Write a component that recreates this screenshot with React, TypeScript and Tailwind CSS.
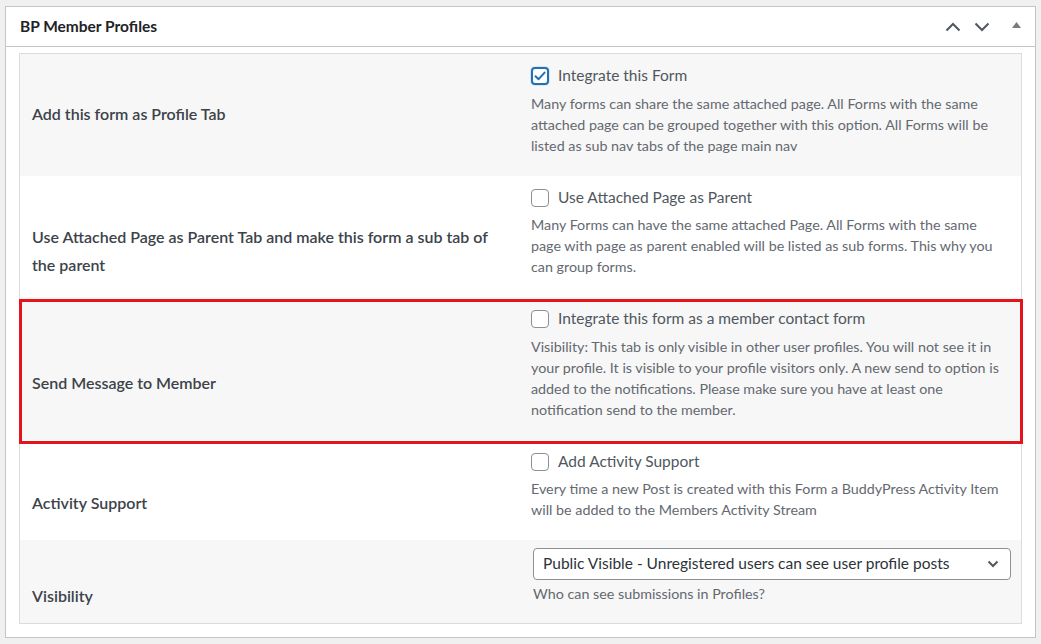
import React from 'react'

const FONT = "font-['Lato','Noto_Sans',sans-serif]"

interface RowProps {
  label: string[]
  labelPad: string
  shaded?: boolean
  children: React.ReactNode
  highlight?: boolean
}

function Lines({ lines }: { lines: string[] }) {
  return (
    <>
      {lines.map((l, i) => (
        <span key={i} className="block whitespace-nowrap">{l}</span>
      ))}
    </>
  )
}

function Row({ label, labelPad, shaded, children, highlight }: RowProps) {
  return (
    <div className={`relative grid grid-cols-[500px_500px] ${shaded ? 'bg-[#f7f7f7]' : 'bg-white'}`}>
      <div className={`pl-[12px] pr-[12px] ${labelPad} text-[16px] leading-[28px] font-semibold text-[#3c434a]`}>
        <Lines lines={label} />
      </div>
      <div className="pl-[11px] pr-[4px]">{children}</div>
      {highlight && (
        <div className="pointer-events-none absolute left-[-1px] right-[-2px] top-[2px] bottom-[-4px] z-10 border-[3px] border-[#e3141c]" />
      )}
    </div>
  )
}

function Checkbox({ checked }: { checked?: boolean }) {
  if (checked) {
    return (
      <span className="flex h-[18px] w-[18px] shrink-0 items-center justify-center rounded-[4px] border-2 border-[#2271b1] bg-white shadow-[0_0_0_1px_#d4e6f5]">
        <svg width="14" height="14" viewBox="0 0 14 14">
          <path d="M2.5 7.2 L5.6 10.2 L11.6 3.6" fill="none" stroke="#2271b1" strokeWidth="2" strokeLinecap="round" strokeLinejoin="round" />
        </svg>
      </span>
    )
  }
  return <span className="h-[18px] w-[18px] shrink-0 rounded-[4px] border border-[#8c8f94] bg-white" />
}

function Option({ checked, title, desc }: { checked?: boolean; title: string; desc: string[] }) {
  return (
    <div className="pt-[13px] pb-[20px]">
      <label className="flex h-[18px] items-center gap-[9px]">
        <Checkbox checked={checked} />
        <span className="text-[15.5px] text-[#50575e]">{title}</span>
      </label>
      <p className="mt-[7.5px] text-[14.3px] leading-[21px] text-[#646970]">
        <Lines lines={desc} />
      </p>
    </div>
  )
}

export default function App() {
  return (
    <div className={`h-[644px] w-[1041px] bg-[#f0f0f1] pl-[5px] pt-[6px] ${FONT}`}>
      <div className="w-[1031px] border border-[#c3c4c7] bg-white">
        <div className="flex h-[40px] items-center justify-between border-b border-[#c3c4c7] pl-[14px] pr-[14px]">
          <h2 className="text-[15.5px] font-bold text-[#1d2327]">BP Member Profiles</h2>
          <div className="flex items-center">
            <svg width="16" height="10" viewBox="0 0 16 10" className="mr-[13px]">
              <path d="M1.5 8.5 L8 2 L14.5 8.5" fill="none" stroke="#50575e" strokeWidth="2" />
            </svg>
            <svg width="16" height="10" viewBox="0 0 16 10" className="mr-[22px]">
              <path d="M1.5 1.5 L8 8 L14.5 1.5" fill="none" stroke="#50575e" strokeWidth="2" />
            </svg>
            <svg width="9" height="6" viewBox="0 0 9 6" className="mb-[4px]">
              <path d="M0 6 L4.5 0 L9 6 Z" fill="#787c82" />
            </svg>
          </div>
        </div>

        <div className="px-[13px] pt-[6px] pb-[13px]">
          <div className="border border-[#dcdcde]">
            <Row label={['Add this form as Profile Tab']} labelPad="pt-[46px]" shaded>
              <Option
                checked
                title="Integrate this Form"
                desc={[
                  'Many forms can share the same attached page. All Forms with the same',
                  'attached page can be grouped together with this option. All Forms will be',
                  'listed as sub nav tabs of the page main nav',
                ]}
              />
            </Row>
            <Row
              label={['Use Attached Page as Parent Tab and make this form a sub tab of', 'the parent']}
              labelPad="pt-[47px]"
            >
              <Option
                title="Use Attached Page as Parent"
                desc={[
                  'Many Forms can have the same attached Page. All Forms with the same',
                  'page with page as parent enabled will be listed as sub forms. This why you',
                  'can group forms.',
                ]}
              />
            </Row>
            <Row label={['Send Message to Member']} labelPad="pt-[72px]" shaded highlight>
              <Option
                title="Integrate this form as a member contact form"
                desc={[
                  'Visibility: This tab is only visible in other user profiles. You will not see it in',
                  'your profile. It is visible to your profile visitors only. A new send to option is',
                  'added to the notifications. Please make sure you have at least one',
                  'notification send to the member.',
                ]}
              />
            </Row>
            <Row label={['Activity Support']} labelPad="pt-[49px]">
              <Option
                title="Add Activity Support"
                desc={[
                  'Every time a new Post is created with this Form a BuddyPress Activity Item',
                  'will be added to the Members Activity Stream',
                ]}
              />
            </Row>
            <Row label={['Visibility']} labelPad="pt-[42px]" shaded>
              <div className="pt-[8px] pb-[19px] pl-[2px]">
                <div className="flex h-[32px] w-[478px] items-center justify-between rounded-[4px] border border-[#8c8f94] bg-white pl-[9px] pr-[11px]">
                  <span className="text-[15.5px] text-[#2c3338]">Public Visible - Unregistered users can see user profile posts</span>
                  <svg width="12" height="8" viewBox="0 0 12 8">
                    <path d="M1.5 1.5 L6 6 L10.5 1.5" fill="none" stroke="#50575e" strokeWidth="2" />
                  </svg>
                </div>
                <p className="mt-[3px] text-[14.3px] leading-[21px] text-[#646970]">Who can see submissions in Profiles?</p>
              </div>
            </Row>
          </div>
        </div>
      </div>
    </div>
  )
}
